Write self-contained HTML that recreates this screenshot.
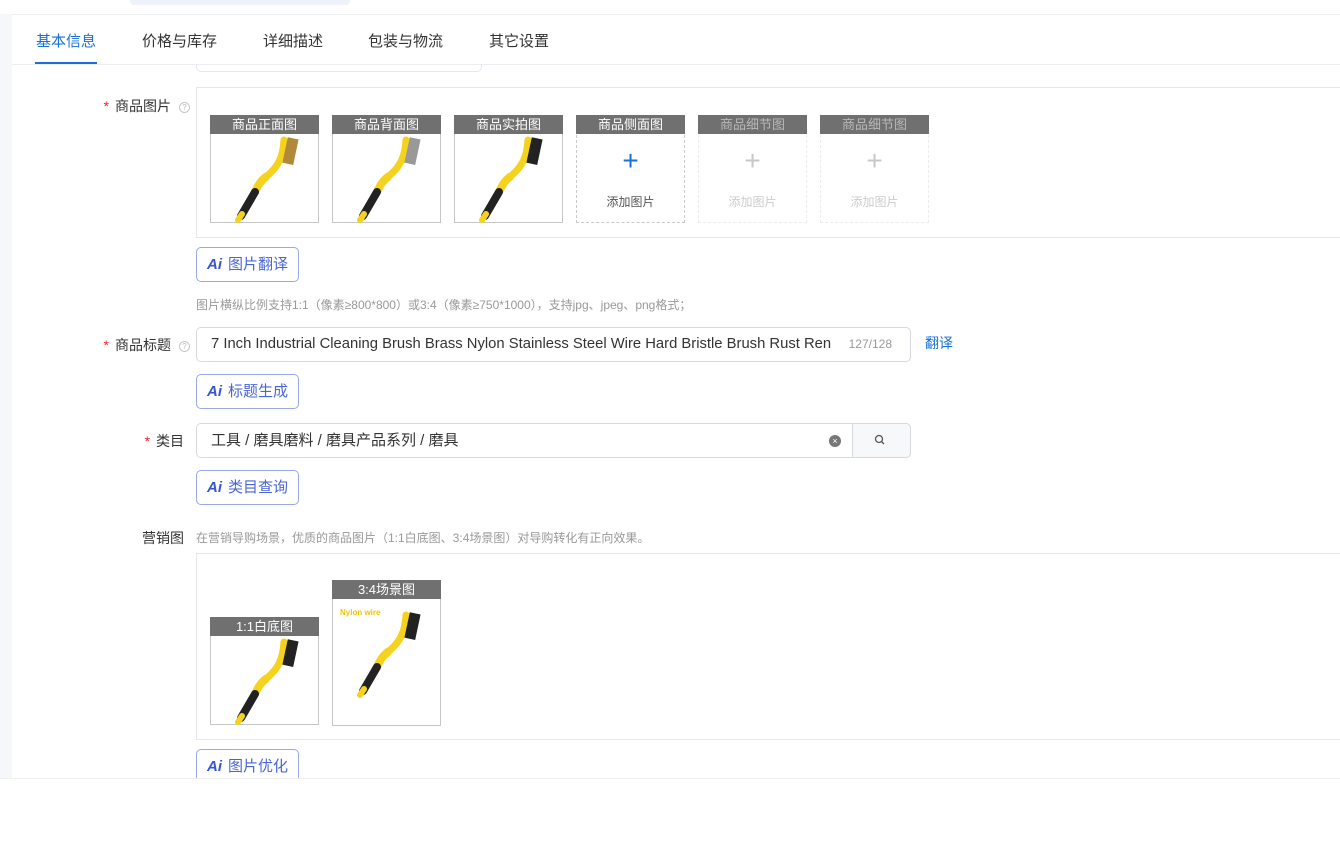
<!DOCTYPE html>
<html><head><meta charset="utf-8">
<style>
*{margin:0;padding:0;box-sizing:border-box}
body{width:1340px;height:848px;background:#fff;font-family:"Liberation Sans","Noto Sans CJK SC",sans-serif;position:relative;overflow:hidden;color:#333}
.a{position:absolute}
.left{left:0;top:14px;width:12px;height:764px;background:#f5f7fa}
.tab{top:30px;font-size:15px;color:#333}
.lbl{font-size:14px;color:#333;text-align:right}
.req{color:#f5222d;margin-right:6px}
.q{display:inline-block;width:11px;height:11px;border:1px solid #c8c8c8;border-radius:50%;font-size:8px;line-height:9px;text-align:center;color:#bbb;margin-left:8px;vertical-align:1px}
.box{border:1px solid #e4e7ed;border-right:none}
.card{width:109px;height:108px;border:1px solid #c6c6c6;background:#fff}
.card .h{position:absolute;left:-1px;top:-1px;width:109px;height:19px;background:#707070;color:#fff;font-size:13px;text-align:center;line-height:19px}
.add{width:109px;height:108px;border:1px dashed #c8c8c8}
.add.d{border-color:#ececec}
.add .h{position:absolute;left:-1px;top:-1px;width:109px;height:19px;background:#707070;color:#fff;font-size:13px;text-align:center;line-height:19px}
.add.d .h{color:#b8b8b8}
.plus{position:absolute;left:0;width:100%;top:30px;text-align:center;font-size:28px;color:#1a6fd8;font-weight:300;line-height:30px}
.add.d .plus{color:#c8c8c8}
.at{position:absolute;left:0;width:100%;top:77px;text-align:center;font-size:12px;color:#555}
.add.d .at{color:#ccc}
.ai{height:35px;width:103px;border:1px solid #9aa8e6;border-radius:5px;font-size:15px;color:#4a66d4;line-height:33px;padding:0 0 0 10px;background:#fff}
.ai b{font-style:italic;font-weight:bold;margin-right:6px;color:#3a55cc}
.hint{font-size:12px;color:#999}
.inp{border:1px solid #d6d9de;border-radius:5px;height:35px;font-size:15px;line-height:33px;padding-left:14px;color:#333}
</style></head><body>
<div class="a" style="left:130px;top:0;width:220px;height:5px;background:#eef3fb;border-radius:0 0 4px 4px"></div>
<div class="a" style="left:0;top:14px;width:1340px;height:1px;background:#eceef1"></div>
<div class="a left"></div>
<div class="a tab" style="left:36px;color:#1a6fd8">基本信息</div>
<div class="a" style="left:35px;top:62px;width:62px;height:2px;background:#1a6fd8"></div>
<div class="a tab" style="left:142px">价格与库存</div>
<div class="a tab" style="left:263px">详细描述</div>
<div class="a tab" style="left:368px">包装与物流</div>
<div class="a tab" style="left:489px">其它设置</div>
<div class="a" style="left:12px;top:64px;width:1328px;height:1px;background:#eceef1"></div>
<div class="a" style="left:196px;top:64px;width:286px;height:8px;border:1px solid #e4e7ed;border-top:none;border-radius:0 0 5px 5px"></div>

<div class="a lbl" style="left:60px;top:96px;width:130px"><span class="req">*</span>商品图片<span class="q">?</span></div>
<div class="a box" style="left:196px;top:87px;width:1144px;height:151px"></div>

<svg width="0" height="0" style="position:absolute"><defs>
<g id="br">
<path d="M73 24 C72 40 68 50 56 60" stroke="#f5d21e" stroke-width="7" fill="none" stroke-linecap="round"/>
<path d="M56 60 C48 66 46 72 44 76" stroke="#f5d21e" stroke-width="8" fill="none"/>
<path d="M44 76 L30 100" stroke="#222" stroke-width="8" fill="none" stroke-linecap="round"/>
<path d="M31 98 L27 104" stroke="#f5d21e" stroke-width="6" stroke-linecap="round"/>
</g></defs></svg>

<div class="a card" style="left:210px;top:115px"><div class="h">商品正面图</div>
<svg class="a" style="left:0;top:0" width="108" height="108"><use href="#br"/><rect x="74" y="22" width="11" height="26" fill="#b08a3a" transform="rotate(12 79 35)"/></svg></div>
<div class="a card" style="left:332px;top:115px"><div class="h">商品背面图</div>
<svg class="a" style="left:0;top:0" width="108" height="108"><use href="#br"/><rect x="74" y="22" width="11" height="26" fill="#999" transform="rotate(12 79 35)"/></svg></div>
<div class="a card" style="left:454px;top:115px"><div class="h">商品实拍图</div>
<svg class="a" style="left:0;top:0" width="108" height="108"><use href="#br"/><rect x="74" y="22" width="11" height="26" fill="#222" transform="rotate(12 79 35)"/></svg></div>
<div class="a add" style="left:576px;top:115px"><div class="h">商品侧面图</div><div class="plus">+</div><div class="at">添加图片</div></div>
<div class="a add d" style="left:698px;top:115px"><div class="h">商品细节图</div><div class="plus">+</div><div class="at">添加图片</div></div>
<div class="a add d" style="left:820px;top:115px"><div class="h">商品细节图</div><div class="plus">+</div><div class="at">添加图片</div></div>

<div class="a ai" style="left:196px;top:247px"><b>Ai</b>图片翻译</div>
<div class="a hint" style="left:196px;top:296px">图片横纵比例支持1:1（像素≥800*800）或3:4（像素≥750*1000），支持jpg、jpeg、png格式；</div>

<div class="a lbl" style="left:60px;top:335px;width:130px"><span class="req">*</span>商品标题<span class="q">?</span></div>
<div class="a inp" style="left:196px;top:327px;width:715px;font-size:14.8px">7 Inch Industrial Cleaning Brush Brass Nylon Stainless Steel Wire Hard Bristle Brush Rust Ren<span class="a" style="right:18px;top:0;font-size:12px;color:#999">127/128</span></div>
<div class="a" style="left:925px;top:333px;font-size:14px;color:#1a6fd8">翻译</div>
<div class="a ai" style="left:196px;top:374px"><b>Ai</b>标题生成</div>

<div class="a lbl" style="left:60px;top:431px;width:124px"><span class="req">*</span>类目</div>
<div class="a inp" style="left:196px;top:423px;width:715px">工具 / 磨具磨料 / 磨具产品系列 / 磨具
<span class="a" style="left:632px;top:11px;width:12px;height:12px;border-radius:50%;background:#777;color:#fff;font-size:9px;line-height:12px;text-align:center">×</span>
<span class="a" style="left:655px;top:-1px;width:59px;height:35px;border:1px solid #d6d9de;background:#f7f8fa;border-radius:0 5px 5px 0"><svg class="a" style="left:21px;top:10px" width="12" height="12"><circle cx="5" cy="5" r="3.5" stroke="#555" stroke-width="1.3" fill="none"/><path d="M7.5 7.5 L10 10" stroke="#555" stroke-width="1.3"/></svg></span></div>
<div class="a ai" style="left:196px;top:470px"><b>Ai</b>类目查询</div>

<div class="a lbl" style="left:60px;top:528px;width:124px">营销图</div>
<div class="a hint" style="left:196px;top:529px">在营销导购场景，优质的商品图片（1:1白底图、3:4场景图）对导购转化有正向效果。</div>
<div class="a box" style="left:196px;top:553px;width:1144px;height:187px"></div>
<div class="a card" style="left:210px;top:617px"><div class="h">1:1白底图</div>
<svg class="a" style="left:0;top:0" width="108" height="108"><use href="#br"/><rect x="74" y="22" width="11" height="26" fill="#222" transform="rotate(12 79 35)"/></svg></div>
<div class="a card" style="left:332px;top:580px;height:146px"><div class="h">3:4场景图</div>
<div class="a" style="left:7px;top:27px;font-size:8px;font-weight:bold;color:#f5c400">Nylon wire</div>
<svg class="a" style="left:0;top:10px" width="108" height="108"><use href="#br"/><rect x="74" y="22" width="11" height="26" fill="#222" transform="rotate(12 79 35)"/></svg></div>
<div class="a ai" style="left:196px;top:749px"><b>Ai</b>图片优化</div>
<div class="a" style="left:0;top:778px;width:1340px;height:70px;background:#fff;border-top:1px solid #f0f0f0"></div>
</body></html>
